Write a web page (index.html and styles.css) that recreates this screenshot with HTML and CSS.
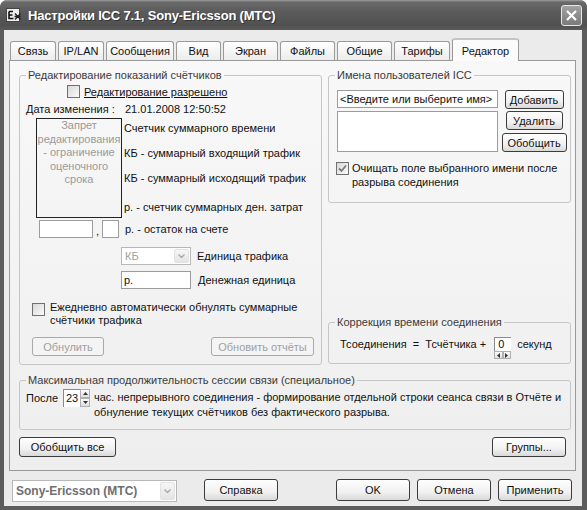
FILE: index.html
```html
<!DOCTYPE html>
<html lang="ru">
<head>
  <meta charset="UTF-8" />
  <title>Настройки ICC 7.1</title>
  <link rel="stylesheet" href="styles.css">
</head>
<body>
  <div class="window">
    <header class="titlebar">
      <svg class="app-icon" width="16" height="16" viewBox="0 0 16 16">
        <rect x="0.5" y="1.5" width="13" height="13" fill="#eee" stroke="#444"/>
        <path d="M3 4.5h4M3 4.5v7h4.5M3 8h3.5" stroke="#111" stroke-width="1.6" fill="none"/>
        <path d="M9 6.5l5.5 6M14.5 6.5l-5.5 6M8.5 9.5h6" stroke="#222" stroke-width="1.3"/>
      </svg>
      <span class="title">Настройки ICC 7.1, Sony-Ericsson (МТС)</span>
      <span class="close">
        <svg width="13" height="13" viewBox="0 0 13 13"><path d="M2 2l9 9M11 2l-9 9" stroke="#fff" stroke-width="2.2"/></svg>
      </span>
    </header>

    <div class="client">
      <nav class="tabs">
        <div class="tab">Связь</div>
        <div class="tab">IP/LAN</div>
        <div class="tab">Сообщения</div>
        <div class="tab">Вид</div>
        <div class="tab">Экран</div>
        <div class="tab">Файлы</div>
        <div class="tab">Общие</div>
        <div class="tab">Тарифы</div>
        <div class="tab active">Редактор</div>
      </nav>

      <section class="panel">
        <div class="top-row">
          <fieldset class="group group-edit">
            <legend>Редактирование показаний счётчиков</legend>
            <div class="row allow-row">
              <span class="check"></span>
              <span class="allow-label">Редактирование разрешено</span>
            </div>
            <div class="row date-row">
              <span class="date-label">Дата изменения :</span>
              <span>21.01.2008 12:50:52</span>
            </div>
            <div class="row counters-row">
              <div class="locked-box">Запрет редактирования - ограничение оценочного срока</div>
              <div class="counter-labels">
                <span>Счетчик суммарного времени</span>
                <span>КБ - суммарный входящий трафик</span>
                <span>КБ - суммарный исходящий трафик</span>
                <span>р. - счетчик суммарных ден. затрат</span>
              </div>
            </div>
            <div class="row balance-row">
              <span class="field balance-int"></span>
              <span class="comma">,</span>
              <span class="field balance-frac"></span>
              <span class="balance-label">р. - остаток на счете</span>
            </div>
            <div class="row unit-row">
              <span class="combo combo-unit">
                <span class="combo-text">КБ</span>
                <span class="combo-btn">
                  <svg width="7" height="4" viewBox="0 0 7 4"><path d="M0.5 0.5l3 3 3-3" stroke="#aaa" stroke-width="1.4" fill="none"/></svg>
                </span>
              </span>
              <span class="unit-label">Единица трафика</span>
            </div>
            <div class="row money-row">
              <span class="field money-field">р.</span>
              <span class="money-label">Денежная единица</span>
            </div>
            <div class="row daily-row">
              <span class="check"></span>
              <span class="daily-label">Ежедневно автоматически обнулять суммарные<br>счётчики трафика</span>
            </div>
            <div class="row edit-buttons">
              <button class="btn btn-disabled reset-btn">Обнулить</button>
              <button class="btn btn-disabled refresh-btn">Обновить отчёты</button>
            </div>
          </fieldset>

          <div class="side">
            <fieldset class="group group-users">
              <legend>Имена пользователей ICC</legend>
              <div class="users-grid">
                <span class="field name-field">&lt;Введите или выберите имя&gt;</span>
                <button class="btn add-btn">Добавить</button>
                <div class="field names-list"></div>
                <button class="btn del-btn">Удалить</button>
                <button class="btn merge-btn">Обобщить</button>
              </div>
              <div class="row clear-row">
                <span class="check">
                  <svg width="9" height="9" viewBox="0 0 9 9"><path d="M1 4.5l2.5 2.5 4.5-5.5" stroke="#7a7a7a" stroke-width="1.8" fill="none"/></svg>
                </span>
                <span class="clear-label">Очищать поле выбранного имени после<br>разрыва соединения</span>
              </div>
            </fieldset>

            <fieldset class="group group-corr">
              <legend>Коррекция времени соединения</legend>
              <div class="row corr-row">
                <span class="corr-text">Тсоединения&nbsp; =&nbsp; Тсчётчика +</span>
                <span class="hspin">
                  <span class="spin-field">0</span>
                  <span class="hspin-arrows">
                    <span class="arrow-btn"><svg width="3" height="5" viewBox="0 0 3 5"><path d="M3 0v5L0 2.5z" fill="#333"/></svg></span>
                    <span class="arrow-btn"><svg width="3" height="5" viewBox="0 0 3 5"><path d="M0 0v5l3-2.5z" fill="#333"/></svg></span>
                  </span>
                </span>
                <span class="corr-unit">секунд</span>
              </div>
            </fieldset>
          </div>
        </div>

        <fieldset class="group group-session">
          <legend>Максимальная продолжительность сессии связи (специальное)</legend>
          <div class="row session-row">
            <span class="session-after">После</span>
            <span class="vspin">
              <span class="spin-field hours-field">23</span>
              <span class="vspin-arrows">
                <span class="arrow-btn"><svg width="5" height="3" viewBox="0 0 5 3"><path d="M0 3h5L2.5 0z" fill="#333"/></svg></span>
                <span class="arrow-btn"><svg width="5" height="3" viewBox="0 0 5 3"><path d="M0 0h5L2.5 3z" fill="#333"/></svg></span>
              </span>
            </span>
            <span class="session-text">час. непрерывного соединения - формирование отдельной строки сеанса связи в Отчёте и<br>обнуление текущих счётчиков без фактического разрыва.</span>
          </div>
        </fieldset>

        <div class="panel-buttons">
          <button class="btn merge-all-btn">Обобщить все</button>
          <button class="btn groups-btn">Группы...</button>
        </div>
      </section>

      <footer class="footer">
        <span class="combo combo-phone">
          <span class="combo-text">Sony-Ericsson (МТС)</span>
          <span class="combo-btn">
            <svg width="7" height="4" viewBox="0 0 7 4"><path d="M0.5 0.5l3 3 3-3" stroke="#aaa" stroke-width="1.4" fill="none"/></svg>
          </span>
        </span>
        <button class="btn footer-btn help-btn">Справка</button>
        <button class="btn footer-btn ok-btn">OK</button>
        <button class="btn footer-btn">Отмена</button>
        <button class="btn footer-btn">Применить</button>
      </footer>
    </div>
  </div>
</body>
</html>
```

FILE: styles.css
```css
* {
  box-sizing: border-box;
}
body {
  margin: 0;
  font-family: "Liberation Sans", Arial, sans-serif;
  font-size: 11px;
  color: #111;
  background: #fff;
}

/* window frame */
.window {
  width: 587px;
  height: 510px;
  background: #5c5c5c;
  border-radius: 8px 8px 0 0;
  display: flex;
  flex-direction: column;
}
.titlebar {
  height: 30px;
  display: flex;
  align-items: center;
  padding: 0 5px 0 6px;
  border-radius: 7px 7px 0 0;
  background: linear-gradient(#a0a0a0, #6a6a6a 2px, #5a5a5a 40%, #515151 85%, #5a5a5a);
  color: #fff;
}
.app-icon {
  margin-right: 6px;
}
.title {
  flex: 1;
  font-weight: bold;
  font-size: 13px;
  letter-spacing: -0.2px;
  text-shadow: 1px 1px #333;
}
.close {
  width: 21px;
  height: 21px;
  border: 1px solid #e8e8e8;
  border-radius: 3px;
  background: linear-gradient(#a2a2a2, #7a7a7a);
  display: flex;
  align-items: center;
  justify-content: center;
}
.client {
  flex: 1;
  margin: 0 5px 4px 4px;
  background: #ebebeb;
}

/* tabs */
.tabs {
  height: 30px;
  display: flex;
  align-items: flex-end;
  padding-left: 6px;
}
.tab {
  height: 19px;
  margin-right: 2px;
  border: 1px solid #9a9a9a;
  border-bottom: none;
  border-radius: 3px 3px 0 0;
  background: linear-gradient(#fff, #ececec);
  display: flex;
  align-items: center;
  justify-content: center;
}
.tab:nth-child(1) { width: 46px; }
.tab:nth-child(2) { width: 46px; }
.tab:nth-child(3) { width: 68px; }
.tab:nth-child(4) { width: 45px; }
.tab:nth-child(5) { width: 55px; }
.tab:nth-child(6) { width: 55px; }
.tab:nth-child(7) { width: 55px; }
.tab:nth-child(8) { width: 56px; }
.tab.active {
  width: 67px;
  height: 23px;
  margin-bottom: -1px;
  position: relative;
  z-index: 1;
  border-top: 2px solid #c4c4c4;
  background: #fbfbfb;
}

/* panel */
.panel {
  margin-left: 5px;
  width: 567px;
  height: 411px;
  border: 1px solid #9a9a9a;
  background: linear-gradient(#f8f8f8, #eeeeee);
  padding: 7px 4px 0 9px;
}
.top-row {
  display: grid;
  grid-template-columns: 303px 243px;
  column-gap: 6px;
  height: 297px;
}
.group {
  margin: 0;
  padding: 0;
  min-width: 0;
  border: 1px solid #c6c6c6;
  border-radius: 3px;
}
.group legend {
  margin-left: 6px;
  padding: 0 2px;
  line-height: 14px;
  color: #3a3a3a;
}
.row {
  display: flex;
  align-items: center;
}
.check {
  width: 13px;
  height: 13px;
  flex-shrink: 0;
  border: 1px solid #707070;
  background: linear-gradient(135deg, #d8d8d8, #fbfbfb);
  display: inline-flex;
  align-items: center;
  justify-content: center;
}
.field {
  height: 18px;
  padding: 0 2px;
  border: 1px solid #9c9c9c;
  background: #fff;
  display: inline-flex;
  align-items: center;
}
.btn {
  font: inherit;
  height: 19px;
  padding: 0;
  border: 1px solid #3c3c3c;
  border-radius: 3px;
  background: linear-gradient(#fefefe, #f1f1f1 60%, #d9d9d9);
  color: #111;
}
.btn-disabled {
  border-color: #a9a9a9;
  color: #a0a0a0;
  background: #f4f4f4;
}
.combo {
  display: inline-flex;
  border: 1px solid #b8b8b8;
  background: #fff;
}
.combo-text {
  flex: 1;
  padding-left: 3px;
  color: #a0a0a0;
  display: flex;
  align-items: center;
}
.combo-btn {
  width: 15px;
  margin: 1px;
  border: 1px solid #e2e2e2;
  border-radius: 2px;
  background: linear-gradient(#f6f6f6, #e4e4e4);
  display: flex;
  align-items: center;
  justify-content: center;
}

/* left group */
.group-edit {
  height: 297px;
}
.allow-row {
  margin: 3px 0 0 47px;
}
.allow-label {
  margin-left: 4px;
  text-decoration: underline;
}
.date-row {
  margin: 4px 0 0 6px;
  height: 14px;
}
.date-label {
  width: 99px;
}
.counters-row {
  margin-top: 2px;
  align-items: flex-start;
}
.locked-box {
  margin-left: 16px;
  width: 86px;
  height: 100px;
  border: 1px solid #222;
  color: #9a9a9a;
  text-align: center;
  line-height: 13.5px;
}
.counter-labels {
  display: flex;
  flex-direction: column;
  gap: 11px;
  margin-left: 2px;
  padding-top: 3px;
  line-height: 14px;
}
.counter-labels span:last-child {
  margin-top: 4px;
}
.balance-row {
  margin: 2px 0 0 19px;
}
.balance-int {
  width: 54px;
}
.comma {
  width: 9px;
  align-self: flex-end;
  text-align: center;
  line-height: 14px;
}
.balance-frac {
  width: 17px;
}
.balance-label {
  margin-left: 6px;
}
.unit-row {
  margin: 9px 0 0 101px;
}
.combo-unit {
  width: 70px;
  height: 18px;
}
.unit-label {
  margin-left: 6px;
}
.money-row {
  margin: 6px 0 0 101px;
}
.money-field {
  width: 70px;
}
.money-label {
  margin-left: 7px;
}
.daily-row {
  margin: 12px 0 0 12px;
  align-items: flex-start;
}
.daily-row .check {
  margin-top: 2px;
}
.daily-label {
  margin-left: 5px;
  line-height: 13px;
}
.edit-buttons {
  margin-top: 10px;
  padding: 0 7px 0 12px;
  justify-content: space-between;
}
.reset-btn { width: 72px; }
.refresh-btn { width: 103px; }

/* right column */
.side {
  display: flex;
  flex-direction: column;
  justify-content: space-between;
}
.group-users {
  height: 135px;
}
.users-grid {
  display: grid;
  grid-template-columns: 161px 1fr;
  grid-template-rows: 18px 19px 19px;
  row-gap: 3px;
  justify-items: center;
  margin: 8px 0 0 8px;
}
.name-field {
  justify-self: stretch;
}
.names-list {
  grid-row: 2 / 4;
  justify-self: stretch;
  height: auto;
}
.add-btn { width: 59px; }
.del-btn { width: 57px; }
.merge-btn { width: 65px; }
.clear-row {
  margin: 9px 0 0 7px;
  align-items: flex-start;
}
.clear-row .check {
  margin-top: 1px;
}
.clear-label {
  margin-left: 3px;
  line-height: 14px;
}
.group-corr {
  height: 49px;
  margin-bottom: 1px;
}
.corr-row {
  margin: 8px 0 0 11px;
  align-items: flex-start;
}
.corr-text,
.corr-unit {
  line-height: 14px;
}
.hspin {
  margin-left: 8px;
  display: inline-flex;
  flex-direction: column;
}
.spin-field {
  width: 17px;
  height: 14px;
  padding-left: 3px;
  border-top: 1px solid #8a8a8a;
  border-left: 1px solid #8a8a8a;
  background: #fff;
  line-height: 13px;
}
.hspin-arrows {
  display: flex;
  height: 8px;
}
.arrow-btn {
  flex: 1;
  border: 1px solid #b0b0b0;
  background: linear-gradient(#fafafa, #e0e0e0);
  display: flex;
  align-items: center;
  justify-content: center;
}
.corr-unit {
  margin-left: 6px;
}

/* session group */
.group-session {
  height: 57px;
  margin-top: 8px;
}
.session-row {
  margin: 2px 0 0 6px;
  align-items: flex-start;
}
.session-after {
  width: 37px;
  line-height: 18px;
}
.vspin {
  display: inline-flex;
}
.hours-field {
  height: 18px;
  line-height: 16px;
  padding-left: 2px;
}
.vspin-arrows {
  width: 10px;
  display: flex;
  flex-direction: column;
}
.session-text {
  margin: 1px 0 0 4px;
  line-height: 15px;
}
.panel-buttons {
  margin-top: 7px;
  padding-right: 5px;
  display: flex;
  justify-content: space-between;
}
.merge-all-btn {
  width: 97px;
  height: 20px;
}
.groups-btn {
  width: 74px;
  height: 20px;
}

/* footer */
.footer {
  height: 35px;
  display: flex;
  align-items: flex-start;
  padding: 8px 10px 0 8px;
}
.combo-phone {
  width: 165px;
  height: 22px;
  margin-top: 1px;
}
.combo-phone .combo-text {
  font-weight: bold;
  font-size: 12px;
  color: #6e6e6e;
}
.footer-btn {
  width: 74px;
  height: 22px;
  margin-left: 7px;
}
.help-btn {
  margin-left: 27px;
}
.ok-btn {
  margin-left: auto;
}
```
